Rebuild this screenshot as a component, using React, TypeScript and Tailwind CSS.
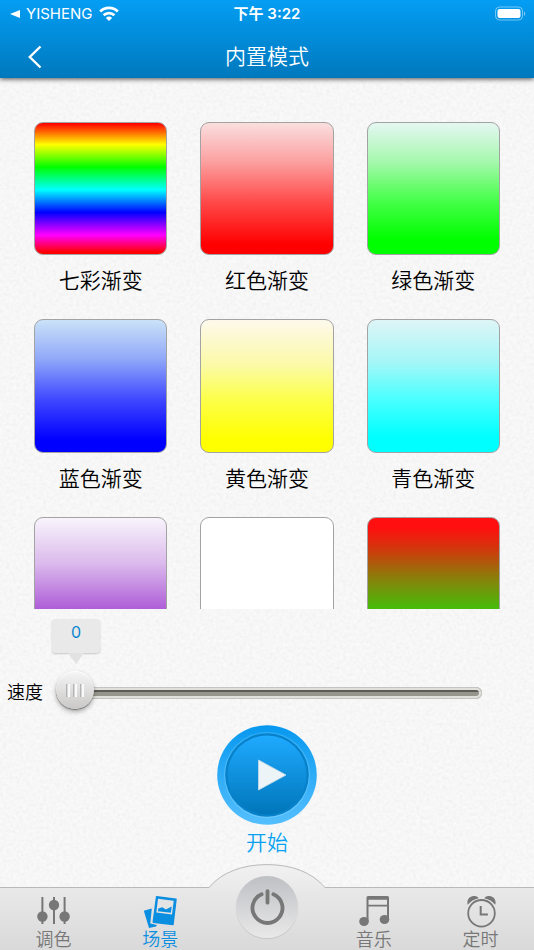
import { useState } from 'react';

const modes = [
  { name: '七彩渐变', fill: 'bg-[linear-gradient(#f00_1%,#ff0_17%,#0f0_34%,#0ff_51%,#00f_68%,#f0f_85%,#f00_98%)]' },
  { name: '红色渐变', fill: 'bg-[linear-gradient(#fadcdc_2%,#fca0a0_30%,#ff4a4a_60%,#f00_92%)]' },
  { name: '绿色渐变', fill: 'bg-[linear-gradient(#e2f7f0_2%,#a5f8ac_30%,#44ff47_60%,#0f0_88%)]' },
  { name: '蓝色渐变', fill: 'bg-[linear-gradient(#c8e0f8_2%,#90a8f8_30%,#4048ff_60%,#00f_90%)]' },
  { name: '黄色渐变', fill: 'bg-[linear-gradient(#fdf9ea_2%,#fbfaa5_35%,#fdff4a_60%,#ff0_90%)]' },
  { name: '青色渐变', fill: 'bg-[linear-gradient(#dcf5f7_2%,#a5f6f7_32%,#4affff_60%,#0ff_88%)]' },
  { name: '紫色渐变', fill: 'bg-[linear-gradient(#f7f2fb_2%,#dbbaec_35%,#b060d8_68%,#9020c0_100%)]' },
  { name: '白色渐变', fill: 'bg-white' },
  { name: '红绿渐变', fill: 'bg-[linear-gradient(#ff0f0f_8%,#d4340c_23%,#8a7f0a_46%,#4bb80a_67%,#0f0_100%)]' },
];

// Fine paper grain behind the whole screen
function PaperTexture() {
  return (
    <svg className="absolute inset-0 -z-10 h-full w-full opacity-10" aria-hidden="true">
      <filter id="grain">
        <feTurbulence type="fractalNoise" baseFrequency="0.3" numOctaves="2" seed="4" />
        <feColorMatrix type="saturate" values="0" />
        <feComponentTransfer>
          <feFuncA type="linear" slope="0" intercept="1" />
        </feComponentTransfer>
      </filter>
      <rect width="100%" height="100%" filter="url(#grain)" />
    </svg>
  );
}

function StatusBar() {
  return (
    <div className="grid h-7 grid-cols-3 items-center px-2 text-[15px]">
      <div className="flex items-center gap-1.5">
        <svg className="h-2 w-3 shrink-0" viewBox="0 0 12 8" fill="currentColor" aria-hidden="true">
          <path d="M12 0v8L2 4z" />
        </svg>
        <span>YISHENG</span>
        <svg className="h-4 w-5 shrink-0" viewBox="0 0 20 16" fill="none" stroke="currentColor" strokeWidth="2.8" aria-hidden="true">
          <path d="M1.200 5.400a12.600 12.600 0 0 1 17.600 0" />
          <path d="M4.600 9.200a7.800 7.800 0 0 1 10.800 0" />
          <path d="M10 15 6.900 11.900a4.400 4.400 0 0 1 6.200 0z" fill="currentColor" stroke="none" />
        </svg>
      </div>
      <span className="whitespace-nowrap text-center font-semibold">下午 3:22</span>
      <svg className="h-4 w-8 justify-self-end" viewBox="0 0 32 16" aria-hidden="true">
        <rect x="1.500" y="1" width="27" height="13" rx="4" fill="none" stroke="#fff" strokeOpacity="0.45" />
        <rect x="3.500" y="3" width="23" height="9" rx="2" fill="#fff" />
        <path d="M30 5.500a2.600 2.600 0 0 1 0 4.500z" fill="#fff" fillOpacity="0.5" />
      </svg>
    </div>
  );
}

function Header() {
  return (
    <header className="relative z-10 h-[78px] shrink-0 bg-linear-to-b from-[#049ef4] to-[#0078bd] text-white shadow-[0_1px_5px_rgba(0,0,0,0.7)]">
      <StatusBar />
      <div className="grid h-[58px] grid-cols-3 items-center">
        <button type="button" aria-label="返回" className="ml-5 flex h-10 w-10 items-center">
          <svg className="ml-2 h-6 w-4" viewBox="0 0 16 24" fill="none" stroke="currentColor" strokeWidth="2.4" aria-hidden="true">
            <path d="M12.500 1.500 1.800 12l10.700 10.500" />
          </svg>
        </button>
        <h1 className="text-center text-[21px] font-[350]">内置模式</h1>
      </div>
    </header>
  );
}

function ModeGrid() {
  return (
    <main className="min-h-0 flex-1 overflow-y-auto px-[34px] pt-11 [scrollbar-width:none]">
      <div className="grid grid-cols-3 gap-x-[33px]">
        {modes.map((mode) => (
          <button key={mode.name} type="button" className="flex flex-col">
            <span className={`aspect-square w-full rounded-[9px] border border-[#a3a3a3] bg-origin-border ${mode.fill}`} />
            <span className="h-16 w-full pt-2.5 text-center text-[21px] font-[350] leading-8">{mode.name}</span>
          </button>
        ))}
      </div>
    </main>
  );
}

const trackClass =
  '[&::-webkit-slider-runnable-track]:h-3 [&::-webkit-slider-runnable-track]:rounded-full [&::-webkit-slider-runnable-track]:shadow-[inset_0_0_0_1px_#c4c4c1,inset_0_0_0_3px_#e0e0dd] [&::-webkit-slider-runnable-track]:bg-[linear-gradient(#5c5c55_5px,#97968c_5px)]';

const thumbClass =
  '[&::-webkit-slider-thumb]:appearance-none [&::-webkit-slider-thumb]:-mt-4 [&::-webkit-slider-thumb]:size-[38px] [&::-webkit-slider-thumb]:rounded-full [&::-webkit-slider-thumb]:shadow-[0_1px_1px_#777,0_3px_5px_rgba(0,0,0,0.3),inset_0_1px_1px_#fff] [&::-webkit-slider-thumb]:[background:repeating-linear-gradient(90deg,#b4b4b4_0_1px,#d6d6d6_1px_2px,#fafafa_2px_4px,transparent_4px_7px)_center/18px_13px_no-repeat,linear-gradient(#f7f6f6,#c9c8c7)]';

function SpeedSlider() {
  const [speed, setSpeed] = useState(0);

  return (
    <div className="flex h-[116px] shrink-0 items-end pb-3 pl-[7px] pr-[52px]">
      <label htmlFor="speed" className="w-[49px] shrink-0 text-lg font-[350] leading-10">速度</label>
      <div className="relative flex-1">
        <div className="relative mr-[38px]">
          <output
            htmlFor="speed"
            className="absolute bottom-5 h-[34px] w-12 -translate-x-1 rounded-[4px] bg-[#e9e9e9] text-center text-base leading-[27px] text-[#0a86d0] shadow-[0_1px_2px_rgba(0,0,0,0.2)]"
            style={{ left: `${speed}%` }}
          >
            {speed}
            <svg className="absolute left-4 top-full h-3 w-4" viewBox="0 0 16 12" aria-hidden="true">
              <path d="M0 0h16L8 11z" fill="#e2e2e2" />
            </svg>
          </output>
        </div>
        <input
          id="speed"
          type="range"
          min={0}
          max={100}
          value={speed}
          onChange={(e) => setSpeed(Number(e.target.value))}
          className={`block h-10 w-full appearance-none bg-transparent ${trackClass} ${thumbClass}`}
        />
      </div>
    </div>
  );
}

function PlayButton() {
  return (
    <div className="flex h-[162px] shrink-0 flex-col items-center">
      <button type="button" className="flex flex-col items-center text-[21px] font-[350] leading-9 text-[#08a2f0]">
        <svg className="size-[100px]" viewBox="0 0 100 100" aria-hidden="true">
          <defs>
            <linearGradient id="ring" x1="0" y1="0" x2="0" y2="1">
              <stop offset="0" stopColor="#0798ef" />
              <stop offset="1" stopColor="#55bffe" />
            </linearGradient>
            <linearGradient id="disc" x1="0" y1="0" x2="0" y2="1">
              <stop offset="0" stopColor="#1faaff" />
              <stop offset="1" stopColor="#0076ba" />
            </linearGradient>
            <linearGradient id="rim" x1="0" y1="0" x2="0" y2="1">
              <stop offset="0" stopColor="#2cacf5" />
              <stop offset="1" stopColor="#6cc9ff" />
            </linearGradient>
          </defs>
          <circle cx="50" cy="50" r="49.800" fill="url(#ring)" />
          <circle cx="50" cy="50" r="43" fill="url(#rim)" />
          <circle cx="50" cy="50" r="41.800" fill="#0681ca" />
          <circle cx="50" cy="50" r="39.500" fill="url(#disc)" />
          <path d="M41.500 35v30L69 50z" fill="#edf4f8" stroke="#c5dae6" strokeWidth="0.8" />
        </svg>
        开始
      </button>
    </div>
  );
}

function MixerIcon() {
  return (
    <svg className="h-8 w-9" viewBox="0 0 36 32" fill="currentColor" aria-hidden="true">
      <path d="M6.400 1h2v27h-2zM18 1h2v27h-2zM28.600 1h2v27h-2z" />
      <circle cx="7.400" cy="20.500" r="5.200" />
      <circle cx="19" cy="9" r="5.200" />
      <circle cx="29.600" cy="20.500" r="5.200" />
    </svg>
  );
}

function SceneIcon() {
  return (
    <svg className="h-8 w-9" viewBox="0 0 36 32" aria-hidden="true">
      <path d="M1.800 14.800 9.800 12.500 8.300 27.400 15 29l-1 1.400-7 1.600z" fill="currentColor" />
      <path d="M14.600.8 34 3.200 31 28.500 11.300 26.200z" fill="currentColor" stroke="currentColor" strokeWidth="1.500" strokeLinejoin="round" />
      <path d="m16 2.700 15.700 2-1.700 13.800-15.700-1.900z" fill="#e4e4e4" />
      <path d="m15.900 15.200.4-2.800 4-1.200 3.600 2.200 5.800-3-.8 6.400z" fill="currentColor" />
    </svg>
  );
}

function MusicIcon() {
  return (
    <svg className="h-8 w-9" viewBox="0 0 36 32" fill="currentColor" aria-hidden="true">
      <path d="M10.500 1.500q0-1.500 1.500-1.500h19.500q1.500 0 1.500 1.500V24h-2V10.500h-18.500V26h-2zM12.500 3.700v5h18.500v-5z" fillRule="evenodd" />
      <ellipse cx="8" cy="25.500" rx="4.800" ry="4.600" />
      <ellipse cx="28.500" cy="23.500" rx="4.800" ry="4.600" />
    </svg>
  );
}

function AlarmIcon() {
  return (
    <svg className="h-8 w-9" viewBox="0 0 36 32" fill="none" stroke="currentColor" aria-hidden="true">
      <circle cx="18.500" cy="17.300" r="13.300" strokeWidth="1.800" />
      <path d="M17.700 10v8.500h7.200" strokeWidth="2" />
      <path
        d="M4.800 8.800C3.200 4 6.800-.4 11.600 0c2 .2 3.600 1.100 4.100 2.300C11.200 3.200 7.600 5.500 4.800 8.800zM32.200 8.800C33.800 4 30.200-.4 25.400 0c-2 .2-3.600 1.100-4.100 2.300C25.800 3.200 29.400 5.500 32.200 8.800z"
        fill="currentColor"
        stroke="none"
      />
    </svg>
  );
}

const tabs = [
  { label: '调色', Icon: MixerIcon, column: 'col-start-1' },
  { label: '场景', Icon: SceneIcon, column: 'col-start-2' },
  { label: '音乐', Icon: MusicIcon, column: 'col-start-4' },
  { label: '定时', Icon: AlarmIcon, column: 'col-start-5' },
];

function TabBar() {
  const [active, setActive] = useState('场景');

  return (
    <nav className="relative h-[63px] shrink-0 border-t border-[#b9b9b9] bg-linear-to-b from-[#e9e9e9] to-[#d9d9d9]">
      {/* Raised hump that holds the power button */}
      <svg className="absolute -top-6 left-1/2 h-7 w-[116px] -translate-x-1/2" viewBox="0 0 116 28" aria-hidden="true">
        <defs>
          <linearGradient id="hump" x1="0" y1="0" x2="0" y2="1">
            <stop offset="0" stopColor="#f1f1f1" />
            <stop offset="1" stopColor="#e9e9e9" />
          </linearGradient>
        </defs>
        <path d="M0 23.500C13 8 34 .6 58 .6s45 7.400 58 22.900V26H0z" fill="url(#hump)" />
        <path d="M0 23.500C13 8 34 .6 58 .6s45 7.400 58 22.900" fill="none" stroke="#b9b9b9" />
      </svg>
      <button
        type="button"
        aria-label="电源"
        className="absolute -top-3 left-1/2 flex size-[62px] -translate-x-1/2 items-center justify-center rounded-full bg-linear-to-b from-[#bfc0c4] to-[#e9e9e9] text-[#777] shadow-[0_1px_1px_#c4c4c4]"
      >
        <svg className="size-9" viewBox="0 0 36 36" fill="none" stroke="currentColor" strokeWidth="3.800" strokeLinecap="round" aria-hidden="true">
          <path d="M12.600 5.200a15 15 0 1 0 11.800 0" />
          <path d="M18.500 2.200v11.500" />
        </svg>
      </button>
      <div className="grid h-full grid-cols-5">
        {tabs.map(({ label, Icon, column }) => (
          <button
            key={label}
            type="button"
            onClick={() => setActive(label)}
            className={`flex flex-col items-center pt-2 text-lg font-[350] leading-6 ${column} ${
              active === label ? 'text-[#0a8ee0]' : 'text-[#777]'
            }`}
          >
            <Icon />
            <span>{label}</span>
          </button>
        ))}
      </div>
    </nav>
  );
}

export default function App() {
  return (
    <div className="relative isolate flex h-screen flex-col overflow-hidden bg-[#fefefe] font-['Inter','Noto_Sans_CJK_SC',sans-serif] text-black">
      <PaperTexture />
      <Header />
      <ModeGrid />
      <SpeedSlider />
      <PlayButton />
      <TabBar />
    </div>
  );
}
